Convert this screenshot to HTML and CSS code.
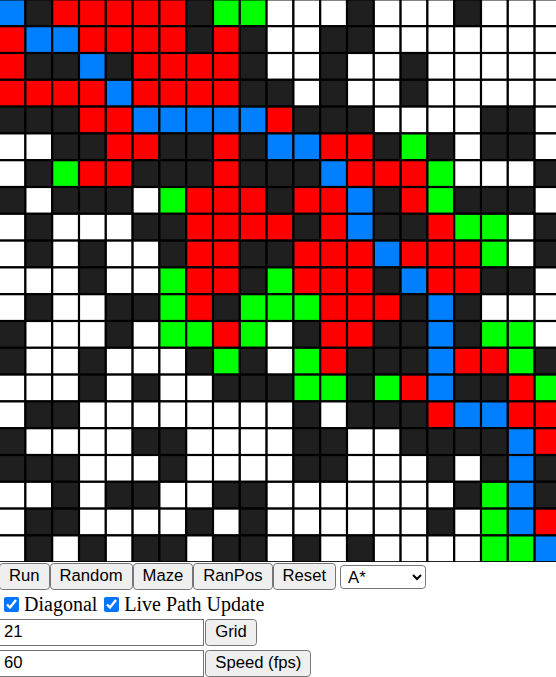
FILE: index.html
```html
<!DOCTYPE html>
<html lang="en">
<head>
<meta charset="utf-8">
<title>Pathfinding</title>
<link rel="stylesheet" href="styles.css">
</head>
<body>
<svg class="board" viewBox="0.052 0.022 20.746 20.97" width="556" height="562" aria-label="Grid">
<rect class="b" x="0" y="0"/><rect class="k" x="1" y="0"/><rect class="r" x="2" y="0"/><rect class="r" x="3" y="0"/><rect class="r" x="4" y="0"/><rect class="r" x="5" y="0"/><rect class="r" x="6" y="0"/><rect class="k" x="7" y="0"/><rect class="g" x="8" y="0"/><rect class="g" x="9" y="0"/><rect class="w" x="10" y="0"/><rect class="w" x="11" y="0"/><rect class="w" x="12" y="0"/><rect class="k" x="13" y="0"/><rect class="w" x="14" y="0"/><rect class="w" x="15" y="0"/><rect class="w" x="16" y="0"/><rect class="k" x="17" y="0"/><rect class="w" x="18" y="0"/><rect class="w" x="19" y="0"/><rect class="w" x="20" y="0"/>
<rect class="r" x="0" y="1"/><rect class="b" x="1" y="1"/><rect class="b" x="2" y="1"/><rect class="r" x="3" y="1"/><rect class="r" x="4" y="1"/><rect class="r" x="5" y="1"/><rect class="r" x="6" y="1"/><rect class="k" x="7" y="1"/><rect class="r" x="8" y="1"/><rect class="k" x="9" y="1"/><rect class="w" x="10" y="1"/><rect class="w" x="11" y="1"/><rect class="k" x="12" y="1"/><rect class="k" x="13" y="1"/><rect class="w" x="14" y="1"/><rect class="w" x="15" y="1"/><rect class="w" x="16" y="1"/><rect class="w" x="17" y="1"/><rect class="w" x="18" y="1"/><rect class="w" x="19" y="1"/><rect class="w" x="20" y="1"/>
<rect class="r" x="0" y="2"/><rect class="k" x="1" y="2"/><rect class="k" x="2" y="2"/><rect class="b" x="3" y="2"/><rect class="k" x="4" y="2"/><rect class="r" x="5" y="2"/><rect class="r" x="6" y="2"/><rect class="r" x="7" y="2"/><rect class="r" x="8" y="2"/><rect class="k" x="9" y="2"/><rect class="w" x="10" y="2"/><rect class="w" x="11" y="2"/><rect class="k" x="12" y="2"/><rect class="w" x="13" y="2"/><rect class="w" x="14" y="2"/><rect class="k" x="15" y="2"/><rect class="w" x="16" y="2"/><rect class="w" x="17" y="2"/><rect class="w" x="18" y="2"/><rect class="w" x="19" y="2"/><rect class="w" x="20" y="2"/>
<rect class="r" x="0" y="3"/><rect class="r" x="1" y="3"/><rect class="r" x="2" y="3"/><rect class="r" x="3" y="3"/><rect class="b" x="4" y="3"/><rect class="r" x="5" y="3"/><rect class="r" x="6" y="3"/><rect class="r" x="7" y="3"/><rect class="r" x="8" y="3"/><rect class="k" x="9" y="3"/><rect class="k" x="10" y="3"/><rect class="w" x="11" y="3"/><rect class="k" x="12" y="3"/><rect class="w" x="13" y="3"/><rect class="w" x="14" y="3"/><rect class="k" x="15" y="3"/><rect class="w" x="16" y="3"/><rect class="w" x="17" y="3"/><rect class="w" x="18" y="3"/><rect class="w" x="19" y="3"/><rect class="w" x="20" y="3"/>
<rect class="k" x="0" y="4"/><rect class="k" x="1" y="4"/><rect class="k" x="2" y="4"/><rect class="r" x="3" y="4"/><rect class="r" x="4" y="4"/><rect class="b" x="5" y="4"/><rect class="b" x="6" y="4"/><rect class="b" x="7" y="4"/><rect class="b" x="8" y="4"/><rect class="b" x="9" y="4"/><rect class="r" x="10" y="4"/><rect class="k" x="11" y="4"/><rect class="k" x="12" y="4"/><rect class="k" x="13" y="4"/><rect class="w" x="14" y="4"/><rect class="w" x="15" y="4"/><rect class="w" x="16" y="4"/><rect class="w" x="17" y="4"/><rect class="k" x="18" y="4"/><rect class="k" x="19" y="4"/><rect class="w" x="20" y="4"/>
<rect class="w" x="0" y="5"/><rect class="w" x="1" y="5"/><rect class="k" x="2" y="5"/><rect class="k" x="3" y="5"/><rect class="r" x="4" y="5"/><rect class="r" x="5" y="5"/><rect class="k" x="6" y="5"/><rect class="k" x="7" y="5"/><rect class="r" x="8" y="5"/><rect class="k" x="9" y="5"/><rect class="b" x="10" y="5"/><rect class="b" x="11" y="5"/><rect class="r" x="12" y="5"/><rect class="r" x="13" y="5"/><rect class="k" x="14" y="5"/><rect class="g" x="15" y="5"/><rect class="k" x="16" y="5"/><rect class="w" x="17" y="5"/><rect class="k" x="18" y="5"/><rect class="k" x="19" y="5"/><rect class="w" x="20" y="5"/>
<rect class="w" x="0" y="6"/><rect class="k" x="1" y="6"/><rect class="g" x="2" y="6"/><rect class="r" x="3" y="6"/><rect class="r" x="4" y="6"/><rect class="k" x="5" y="6"/><rect class="k" x="6" y="6"/><rect class="k" x="7" y="6"/><rect class="r" x="8" y="6"/><rect class="k" x="9" y="6"/><rect class="k" x="10" y="6"/><rect class="k" x="11" y="6"/><rect class="b" x="12" y="6"/><rect class="r" x="13" y="6"/><rect class="r" x="14" y="6"/><rect class="r" x="15" y="6"/><rect class="g" x="16" y="6"/><rect class="w" x="17" y="6"/><rect class="w" x="18" y="6"/><rect class="w" x="19" y="6"/><rect class="k" x="20" y="6"/>
<rect class="k" x="0" y="7"/><rect class="w" x="1" y="7"/><rect class="k" x="2" y="7"/><rect class="k" x="3" y="7"/><rect class="k" x="4" y="7"/><rect class="w" x="5" y="7"/><rect class="g" x="6" y="7"/><rect class="r" x="7" y="7"/><rect class="r" x="8" y="7"/><rect class="r" x="9" y="7"/><rect class="k" x="10" y="7"/><rect class="r" x="11" y="7"/><rect class="r" x="12" y="7"/><rect class="b" x="13" y="7"/><rect class="k" x="14" y="7"/><rect class="r" x="15" y="7"/><rect class="g" x="16" y="7"/><rect class="k" x="17" y="7"/><rect class="k" x="18" y="7"/><rect class="k" x="19" y="7"/><rect class="w" x="20" y="7"/>
<rect class="w" x="0" y="8"/><rect class="k" x="1" y="8"/><rect class="w" x="2" y="8"/><rect class="w" x="3" y="8"/><rect class="w" x="4" y="8"/><rect class="k" x="5" y="8"/><rect class="k" x="6" y="8"/><rect class="r" x="7" y="8"/><rect class="r" x="8" y="8"/><rect class="r" x="9" y="8"/><rect class="r" x="10" y="8"/><rect class="k" x="11" y="8"/><rect class="r" x="12" y="8"/><rect class="b" x="13" y="8"/><rect class="k" x="14" y="8"/><rect class="k" x="15" y="8"/><rect class="r" x="16" y="8"/><rect class="g" x="17" y="8"/><rect class="g" x="18" y="8"/><rect class="w" x="19" y="8"/><rect class="k" x="20" y="8"/>
<rect class="w" x="0" y="9"/><rect class="k" x="1" y="9"/><rect class="w" x="2" y="9"/><rect class="k" x="3" y="9"/><rect class="w" x="4" y="9"/><rect class="w" x="5" y="9"/><rect class="k" x="6" y="9"/><rect class="r" x="7" y="9"/><rect class="r" x="8" y="9"/><rect class="k" x="9" y="9"/><rect class="k" x="10" y="9"/><rect class="r" x="11" y="9"/><rect class="r" x="12" y="9"/><rect class="r" x="13" y="9"/><rect class="b" x="14" y="9"/><rect class="r" x="15" y="9"/><rect class="r" x="16" y="9"/><rect class="r" x="17" y="9"/><rect class="g" x="18" y="9"/><rect class="w" x="19" y="9"/><rect class="k" x="20" y="9"/>
<rect class="w" x="0" y="10"/><rect class="w" x="1" y="10"/><rect class="w" x="2" y="10"/><rect class="k" x="3" y="10"/><rect class="w" x="4" y="10"/><rect class="w" x="5" y="10"/><rect class="g" x="6" y="10"/><rect class="r" x="7" y="10"/><rect class="r" x="8" y="10"/><rect class="k" x="9" y="10"/><rect class="g" x="10" y="10"/><rect class="r" x="11" y="10"/><rect class="r" x="12" y="10"/><rect class="r" x="13" y="10"/><rect class="k" x="14" y="10"/><rect class="b" x="15" y="10"/><rect class="r" x="16" y="10"/><rect class="r" x="17" y="10"/><rect class="k" x="18" y="10"/><rect class="k" x="19" y="10"/><rect class="w" x="20" y="10"/>
<rect class="w" x="0" y="11"/><rect class="k" x="1" y="11"/><rect class="w" x="2" y="11"/><rect class="w" x="3" y="11"/><rect class="k" x="4" y="11"/><rect class="k" x="5" y="11"/><rect class="g" x="6" y="11"/><rect class="r" x="7" y="11"/><rect class="k" x="8" y="11"/><rect class="g" x="9" y="11"/><rect class="g" x="10" y="11"/><rect class="g" x="11" y="11"/><rect class="r" x="12" y="11"/><rect class="r" x="13" y="11"/><rect class="r" x="14" y="11"/><rect class="k" x="15" y="11"/><rect class="b" x="16" y="11"/><rect class="k" x="17" y="11"/><rect class="w" x="18" y="11"/><rect class="w" x="19" y="11"/><rect class="w" x="20" y="11"/>
<rect class="k" x="0" y="12"/><rect class="w" x="1" y="12"/><rect class="w" x="2" y="12"/><rect class="w" x="3" y="12"/><rect class="k" x="4" y="12"/><rect class="w" x="5" y="12"/><rect class="g" x="6" y="12"/><rect class="g" x="7" y="12"/><rect class="r" x="8" y="12"/><rect class="g" x="9" y="12"/><rect class="w" x="10" y="12"/><rect class="k" x="11" y="12"/><rect class="r" x="12" y="12"/><rect class="r" x="13" y="12"/><rect class="k" x="14" y="12"/><rect class="k" x="15" y="12"/><rect class="b" x="16" y="12"/><rect class="k" x="17" y="12"/><rect class="g" x="18" y="12"/><rect class="g" x="19" y="12"/><rect class="w" x="20" y="12"/>
<rect class="k" x="0" y="13"/><rect class="w" x="1" y="13"/><rect class="w" x="2" y="13"/><rect class="k" x="3" y="13"/><rect class="w" x="4" y="13"/><rect class="w" x="5" y="13"/><rect class="w" x="6" y="13"/><rect class="k" x="7" y="13"/><rect class="g" x="8" y="13"/><rect class="k" x="9" y="13"/><rect class="w" x="10" y="13"/><rect class="g" x="11" y="13"/><rect class="r" x="12" y="13"/><rect class="k" x="13" y="13"/><rect class="k" x="14" y="13"/><rect class="k" x="15" y="13"/><rect class="b" x="16" y="13"/><rect class="r" x="17" y="13"/><rect class="r" x="18" y="13"/><rect class="g" x="19" y="13"/><rect class="k" x="20" y="13"/>
<rect class="w" x="0" y="14"/><rect class="w" x="1" y="14"/><rect class="w" x="2" y="14"/><rect class="k" x="3" y="14"/><rect class="w" x="4" y="14"/><rect class="k" x="5" y="14"/><rect class="w" x="6" y="14"/><rect class="w" x="7" y="14"/><rect class="k" x="8" y="14"/><rect class="k" x="9" y="14"/><rect class="k" x="10" y="14"/><rect class="g" x="11" y="14"/><rect class="g" x="12" y="14"/><rect class="k" x="13" y="14"/><rect class="g" x="14" y="14"/><rect class="r" x="15" y="14"/><rect class="b" x="16" y="14"/><rect class="k" x="17" y="14"/><rect class="k" x="18" y="14"/><rect class="r" x="19" y="14"/><rect class="g" x="20" y="14"/>
<rect class="w" x="0" y="15"/><rect class="k" x="1" y="15"/><rect class="k" x="2" y="15"/><rect class="w" x="3" y="15"/><rect class="w" x="4" y="15"/><rect class="w" x="5" y="15"/><rect class="w" x="6" y="15"/><rect class="w" x="7" y="15"/><rect class="w" x="8" y="15"/><rect class="w" x="9" y="15"/><rect class="w" x="10" y="15"/><rect class="k" x="11" y="15"/><rect class="w" x="12" y="15"/><rect class="k" x="13" y="15"/><rect class="k" x="14" y="15"/><rect class="k" x="15" y="15"/><rect class="r" x="16" y="15"/><rect class="b" x="17" y="15"/><rect class="b" x="18" y="15"/><rect class="r" x="19" y="15"/><rect class="r" x="20" y="15"/>
<rect class="k" x="0" y="16"/><rect class="w" x="1" y="16"/><rect class="w" x="2" y="16"/><rect class="w" x="3" y="16"/><rect class="w" x="4" y="16"/><rect class="k" x="5" y="16"/><rect class="k" x="6" y="16"/><rect class="w" x="7" y="16"/><rect class="w" x="8" y="16"/><rect class="w" x="9" y="16"/><rect class="w" x="10" y="16"/><rect class="k" x="11" y="16"/><rect class="k" x="12" y="16"/><rect class="w" x="13" y="16"/><rect class="w" x="14" y="16"/><rect class="k" x="15" y="16"/><rect class="k" x="16" y="16"/><rect class="k" x="17" y="16"/><rect class="k" x="18" y="16"/><rect class="b" x="19" y="16"/><rect class="r" x="20" y="16"/>
<rect class="k" x="0" y="17"/><rect class="k" x="1" y="17"/><rect class="k" x="2" y="17"/><rect class="w" x="3" y="17"/><rect class="w" x="4" y="17"/><rect class="w" x="5" y="17"/><rect class="k" x="6" y="17"/><rect class="w" x="7" y="17"/><rect class="w" x="8" y="17"/><rect class="w" x="9" y="17"/><rect class="w" x="10" y="17"/><rect class="k" x="11" y="17"/><rect class="k" x="12" y="17"/><rect class="w" x="13" y="17"/><rect class="w" x="14" y="17"/><rect class="w" x="15" y="17"/><rect class="k" x="16" y="17"/><rect class="w" x="17" y="17"/><rect class="k" x="18" y="17"/><rect class="b" x="19" y="17"/><rect class="k" x="20" y="17"/>
<rect class="w" x="0" y="18"/><rect class="w" x="1" y="18"/><rect class="k" x="2" y="18"/><rect class="w" x="3" y="18"/><rect class="k" x="4" y="18"/><rect class="k" x="5" y="18"/><rect class="w" x="6" y="18"/><rect class="w" x="7" y="18"/><rect class="k" x="8" y="18"/><rect class="k" x="9" y="18"/><rect class="w" x="10" y="18"/><rect class="w" x="11" y="18"/><rect class="w" x="12" y="18"/><rect class="w" x="13" y="18"/><rect class="w" x="14" y="18"/><rect class="w" x="15" y="18"/><rect class="w" x="16" y="18"/><rect class="k" x="17" y="18"/><rect class="g" x="18" y="18"/><rect class="b" x="19" y="18"/><rect class="k" x="20" y="18"/>
<rect class="w" x="0" y="19"/><rect class="k" x="1" y="19"/><rect class="k" x="2" y="19"/><rect class="w" x="3" y="19"/><rect class="w" x="4" y="19"/><rect class="w" x="5" y="19"/><rect class="w" x="6" y="19"/><rect class="k" x="7" y="19"/><rect class="w" x="8" y="19"/><rect class="k" x="9" y="19"/><rect class="w" x="10" y="19"/><rect class="w" x="11" y="19"/><rect class="w" x="12" y="19"/><rect class="w" x="13" y="19"/><rect class="w" x="14" y="19"/><rect class="w" x="15" y="19"/><rect class="k" x="16" y="19"/><rect class="w" x="17" y="19"/><rect class="g" x="18" y="19"/><rect class="b" x="19" y="19"/><rect class="r" x="20" y="19"/>
<rect class="w" x="0" y="20"/><rect class="k" x="1" y="20"/><rect class="w" x="2" y="20"/><rect class="k" x="3" y="20"/><rect class="w" x="4" y="20"/><rect class="k" x="5" y="20"/><rect class="k" x="6" y="20"/><rect class="w" x="7" y="20"/><rect class="k" x="8" y="20"/><rect class="k" x="9" y="20"/><rect class="w" x="10" y="20"/><rect class="k" x="11" y="20"/><rect class="w" x="12" y="20"/><rect class="k" x="13" y="20"/><rect class="w" x="14" y="20"/><rect class="w" x="15" y="20"/><rect class="w" x="16" y="20"/><rect class="w" x="17" y="20"/><rect class="g" x="18" y="20"/><rect class="g" x="19" y="20"/><rect class="b" x="20" y="20"/>
</svg>
<div class="controls">
  <div class="actions">
    <button class="btn" type="button">Run</button>
    <button class="btn" type="button">Random</button>
    <button class="btn" type="button">Maze</button>
    <button class="btn" type="button">RanPos</button>
    <button class="btn" type="button">Reset</button>
    <select class="algo"><option>A*</option><option>Dijkstra</option></select>
  </div>
  <div class="options">
    <label class="opt"><input class="check" type="checkbox" checked>Diagonal</label>
    <label class="opt"><input class="check" type="checkbox" checked>Live Path Update</label>
  </div>
  <div class="field">
    <input class="num" type="text" value="21">
    <button class="btn" type="button">Grid</button>
  </div>
  <div class="field">
    <input class="num" type="text" value="60">
    <button class="btn" type="button">Speed (fps)</button>
  </div>
</div>
</body>
</html>
```

FILE: styles.css
```css
html, body {
  margin: 0;
  padding: 0;
  overflow: hidden;
  background: #fff;
  color: #000;
}

.board {
  display: block;
}

.board rect {
  width: 1px;
  height: 1px;
  stroke: #000;
  stroke-width: 0.08px;
}

.board .w { fill: #fff; }
.board .k { fill: #1f1f1f; }
.board .r { fill: #f00; }
.board .b { fill: #0080ff; }
.board .g { fill: #0f0; }

.controls {
  display: flex;
  flex-direction: column;
  margin: 1px 0 0 -1px;
  font-family: "Liberation Sans", Arial, sans-serif;
}

.actions {
  display: flex;
  align-items: flex-start;
}

.btn {
  box-sizing: border-box;
  height: 26.5px;
  margin: 0;
  padding: 0 9px;
  border: 1px solid #767676;
  border-radius: 3.75px;
  background: #efefef;
  color: #000;
  font: 16.67px "Liberation Sans", Arial, sans-serif;
}

.algo {
  box-sizing: border-box;
  width: 86px;
  height: 24px;
  margin: 2px 0 0 4px;
  padding: 0 0 0 3px;
  border: 1px solid #767676;
  border-radius: 3.75px;
  background: #fff;
  color: #000;
  font: 16.67px "Liberation Sans", Arial, sans-serif;
}

.options {
  display: flex;
  align-items: center;
  gap: 7px;
  height: 29.5px;
  font: 20px "Liberation Serif", "Times New Roman", serif;
}

.opt {
  display: flex;
  align-items: center;
}

.check {
  width: 15px;
  height: 15px;
  margin: 0 5px 0 0;
  accent-color: #0075ff;
}

.opt:first-child {
  margin-left: 5px;
}

.field {
  display: flex;
  gap: 1px;
  margin-bottom: 4.7px;
}

.num {
  box-sizing: border-box;
  width: 205.3px;
  height: 26.5px;
  margin: 0;
  padding: 0 4px;
  border: 1px solid #767676;
  border-radius: 0;
  color: #000;
  font: 16.67px "Liberation Sans", Arial, sans-serif;
  outline: none;
}
```
